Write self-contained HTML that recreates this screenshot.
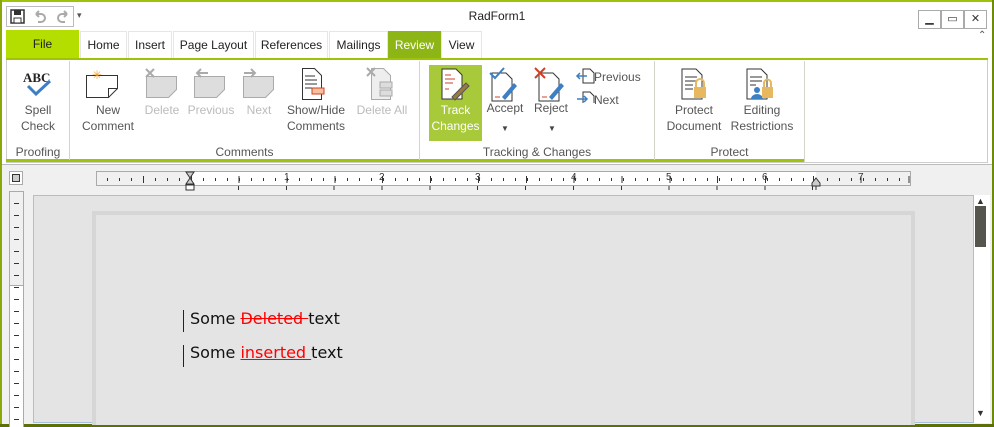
<!DOCTYPE html>
<html><head><meta charset="utf-8"><style>
*{margin:0;padding:0;box-sizing:border-box}
body{width:994px;height:427px;overflow:hidden;background:#fff;font-family:"Liberation Sans",sans-serif;font-size:12px;color:#333;position:relative}
.a{position:absolute}
.tab{position:absolute;top:31px;height:27px;line-height:27px;text-align:center;font-size:12px;color:#222;border:1px solid #e6e6e6;border-bottom:none;background:#fff}
.lbl{position:absolute;text-align:center;font-size:12px;line-height:16px;color:#555}
.dis{color:#bbb}
.gl{position:absolute;top:145px;font-size:12px;color:#555;text-align:center}
.sep{position:absolute;top:61px;width:1px;height:99px;background:#d4d4c8}
.wb{position:absolute;top:10px;width:23px;height:19px;border:1px solid #aaa;background:#fff;font-size:11px;text-align:center;line-height:17px;color:#333}
</style></head><body>
<div class="a" style="left:0;top:0;width:994px;height:2px;background:#9ec40a"></div>
<div class="a" style="left:0;top:0;width:2px;height:427px;background:#8aa80a"></div>
<div class="a" style="right:0;top:0;width:2px;height:427px;background:#6d8a08"></div>
<div class="a" style="left:0;bottom:0;width:994px;height:3px;background:#5d7008"></div>
<div class="a" style="left:6px;top:6px;width:68px;height:21px;border:1px solid #bbb"></div>
<svg class="a" style="left:10px;top:9px" width="62" height="16"><rect x="1" y="1" width="13" height="13" fill="none" stroke="#333" stroke-width="1.5"/><rect x="4" y="1" width="7" height="5" fill="#333"/><rect x="4" y="9" width="7" height="5" fill="#fff" stroke="#333"/><path d="M26 5 h5 a4 4 0 0 1 0 8 h-3 M26 5 l3 -3 M26 5 l3 3" stroke="#aaa" stroke-width="2" fill="none"/><path d="M57 5 h-5 a4 4 0 0 0 0 8 h3 M57 5 l-3 -3 M57 5 l-3 3" stroke="#aaa" stroke-width="2" fill="none"/></svg>
<div class="a" style="left:77px;top:10px;font-size:9px;color:#555">▾</div>
<div class="a" style="left:0;width:994px;top:9px;text-align:center;font-size:12px;color:#222">RadForm1</div>
<div class="wb" style="left:918px">▁</div><div class="wb" style="left:941px">▭</div><div class="wb" style="left:964px">✕</div>
<div class="a" style="left:978px;top:30px;font-size:10px;color:#555">⌃</div>
<div class="a" style="left:6px;top:30px;width:73px;height:28px;background:#b3de00;text-align:center;line-height:28px;color:#222">File</div>
<div class="tab" style="left:80px;width:47px">Home</div>
<div class="tab" style="left:128px;width:44px">Insert</div>
<div class="tab" style="left:173px;width:81px">Page Layout</div>
<div class="tab" style="left:255px;width:73px">References</div>
<div class="tab" style="left:329px;width:59px">Mailings</div>
<div class="tab" style="left:388px;width:53px;background:#8db516;color:#fff;border-color:#8db516">Review</div>
<div class="tab" style="left:441px;width:41px">View</div>
<div class="a" style="left:6px;top:58px;width:982px;height:2px;background:#9ec40a"></div>
<div class="a" style="left:6px;top:60px;width:982px;height:103px;border:1px solid #ccc;border-top:none"></div>
<div class="a" style="left:6px;top:159px;width:799px;height:3px;background:#9ec40a"></div>
<div class="sep" style="left:69px"></div><div class="sep" style="left:419px"></div><div class="sep" style="left:654px"></div><div class="sep" style="left:804px;height:102px"></div>
<div class="a" style="left:23px;top:70px;font-family:'Liberation Serif',serif;font-weight:bold;font-size:13px;color:#222">ABC</div>
<svg class="a" style="left:26px;top:80px" width="26" height="16"><path d="M2 6 L10 14 L24 1" stroke="#3d7fc4" stroke-width="3" fill="none"/></svg>
<div class="lbl" style="left:10px;top:102px;width:56px">Spell<br>Check</div>
<div class="gl" style="left:7px;width:62px">Proofing</div>
<svg class="a" style="left:80px;top:66px" width="340" height="36">
<path d="M6.5 9.5 h31 v13 l-9 9 h-22 z M28.5 31.5 v-9 h9" fill="#fff" stroke="#333"/>
<text x="12" y="13" font-size="12" fill="#f0a030">✳</text>
<g fill="#ddd" stroke="#aaa"><path d="M66.5 10.5 h30 v13 l-8 8 h-22 z"/><path d="M114.5 10.5 h30 v13 l-8 8 h-22 z"/><path d="M163.5 10.5 h30 v13 l-8 8 h-22 z"/></g>
<path d="M66 3 l8 8 M74 3 l-8 8" stroke="#aaa" stroke-width="2"/>
<path d="M128 7 h-11 M121 3 l-4 4 4 4" stroke="#aaa" stroke-width="2" fill="none"/>
<path d="M164 7 h11 M171 3 l4 4 -4 4" stroke="#aaa" stroke-width="2" fill="none"/>
<path d="M222.5 2.5 h12 l7 7 v24 h-19 z" fill="#fff" stroke="#333"/><path d="M225 10h10M225 14h12M225 18h12M225 22h12" stroke="#333"/><rect x="232" y="22" width="12" height="6" fill="#f5c0a0" stroke="#d04020"/>
<path d="M291.5 2.5 h12 l7 7 v24 h-19 z" fill="#eee" stroke="#aaa"/><rect x="300" y="16" width="12" height="6" fill="#ddd" stroke="#aaa"/><rect x="300" y="24" width="12" height="6" fill="#ddd" stroke="#aaa"/><path d="M287 2 l8 8 M295 2 l-8 8" stroke="#aaa" stroke-width="2"/>
</svg>
<div class="lbl" style="left:78px;top:102px;width:60px">New<br>Comment</div>
<div class="lbl dis" style="left:142px;top:102px;width:40px">Delete</div>
<div class="lbl dis" style="left:186px;top:102px;width:50px">Previous</div>
<div class="lbl dis" style="left:243px;top:102px;width:32px">Next</div>
<div class="lbl" style="left:284px;top:102px;width:64px">Show/Hide<br>Comments</div>
<div class="lbl dis" style="left:354px;top:102px;width:56px">Delete All</div>
<div class="gl" style="left:70px;width:349px">Comments</div>
<div class="a" style="left:429px;top:65px;width:53px;height:76px;background:#a8c93a"></div>
<svg class="a" style="left:440px;top:67px" width="220" height="36">
<path d="M2 2 h14 l6 6 v24 h-20 z" fill="#fff" stroke="#333"/><path d="M5 8h6M5 12h10M5 16h8M5 22h4" stroke="#d04020"/><path d="M12 30 l14 -14 3 3 -14 14 z" fill="#9a7a40" stroke="#555"/>
<path d="M52 6 h14 l6 6 v22 h-20 z" fill="#fff" stroke="#333"/><path d="M50 6 l5 5 9 -10" stroke="#3d7fc4" stroke-width="2" fill="none"/><path d="M62 30 l12 -14 3 3 -12 14 z" fill="#3d7fc4"/><path d="M55 30h5" stroke="#d04020"/>
<path d="M99 6 h14 l6 6 v22 h-20 z" fill="#fff" stroke="#333"/><path d="M95 1 l10 10 M105 1 l-10 10" stroke="#d04020" stroke-width="2"/><path d="M109 30 l12 -14 3 3 -12 14 z" fill="#3d7fc4"/><path d="M102 30h5" stroke="#d04020"/>
<path d="M143 2 h7 l4 4 v10 h-11 z" fill="#fff" stroke="#333"/><path d="M147 9 h-10 M140 6 l-3 3 3 3" stroke="#3d7fc4" stroke-width="1.5" fill="none"/>
<path d="M143 25 h7 l4 4 v10 h-11 z" fill="#fff" stroke="#333"/><path d="M137 32 h10 M144 29 l3 3 -3 3" stroke="#3d7fc4" stroke-width="1.5" fill="none"/>
</svg>
<div class="lbl" style="left:429px;top:102px;width:53px;color:#fff">Track<br>Changes</div>
<div class="lbl" style="left:484px;top:100px;width:42px">Accept</div>
<div class="lbl" style="left:531px;top:100px;width:40px">Reject</div>
<div class="a" style="left:501px;top:124px;font-size:8px;color:#444">▼</div>
<div class="a" style="left:548px;top:124px;font-size:8px;color:#444">▼</div>
<div class="lbl" style="left:594px;top:69px;text-align:left">Previous</div>
<div class="lbl" style="left:594px;top:92px;text-align:left">Next</div>
<div class="gl" style="left:420px;width:234px">Tracking &amp; Changes</div>
<svg class="a" style="left:680px;top:67px" width="100" height="36">
<path d="M2 2 h14 l6 6 v24 h-20 z" fill="#fff" stroke="#333"/><path d="M5 10h12M5 14h12M5 18h8M5 22h8" stroke="#333"/><rect x="14" y="20" width="12" height="11" fill="#e8b860"/><path d="M16 20 v-4 a4 4 0 0 1 8 0 v4" stroke="#e8b860" stroke-width="2" fill="none"/>
<path d="M67 2 h14 l6 6 v24 h-20 z" fill="#fff" stroke="#333"/><path d="M70 10h12M70 14h12M70 18h6" stroke="#333"/><circle cx="77" cy="23" r="3" fill="#3d7fc4"/><path d="M71 32 a6 5 0 0 1 12 0z" fill="#3d7fc4"/><rect x="82" y="20" width="11" height="11" fill="#e8b860"/><path d="M84 20 v-4 a3.5 3.5 0 0 1 7 0 v4" stroke="#e8b860" stroke-width="2" fill="none"/>
</svg>
<div class="lbl" style="left:664px;top:102px;width:60px">Protect<br>Document</div>
<div class="lbl" style="left:728px;top:102px;width:68px">Editing<br>Restrictions</div>
<div class="gl" style="left:655px;width:149px">Protect</div>
<div class="a" style="left:2px;top:164px;width:990px;height:260px;background:#f0f0f0;border-top:1px solid #bbb"></div>
<div class="a" style="left:9px;top:171px;width:14px;height:14px;border:1px solid #aaa;background:#fff"><div style="margin:2px;width:8px;height:8px;border:1px solid #333;background:#ccc"></div></div>
<div class="a" style="left:96px;top:171px;width:815px;height:15px;border:1px solid #aaa;background:#f0f0f0"></div>
<div class="a" style="left:190px;top:172px;width:626px;height:13px;background:#fff"></div>
<div class="a" style="left:107px;top:178px;width:800px;height:3px;background:repeating-linear-gradient(90deg,#333 0 1px,transparent 1px 12px)"></div>
<div class="a" style="left:143px;top:176px;width:770px;height:7px;background:repeating-linear-gradient(90deg,#333 0 1px,transparent 1px 47.85px)"></div>
<div class="a" style="left:238px;top:186px;width:600px;height:4px;background:repeating-linear-gradient(90deg,#333 0 1px,transparent 1px 47.85px)"></div>
<div class="a" style="left:284px;top:172px;font-size:10px;color:#333">1</div><div class="a" style="left:379px;top:172px;font-size:10px">2</div><div class="a" style="left:475px;top:172px;font-size:10px">3</div><div class="a" style="left:571px;top:172px;font-size:10px">4</div><div class="a" style="left:666px;top:172px;font-size:10px">5</div><div class="a" style="left:762px;top:172px;font-size:10px">6</div><div class="a" style="left:858px;top:172px;font-size:10px">7</div>
<svg class="a" style="left:185px;top:171px" width="10" height="20"><path d="M1 1h8l-4 6z M1 13h8l-4-6z" fill="#ccc" stroke="#333"/><rect x="1" y="14" width="8" height="5" fill="#fff" stroke="#333"/></svg>
<svg class="a" style="left:811px;top:176px" width="10" height="15"><path d="M1 10h8v-3l-4-5-4 5z" fill="#ccc" stroke="#333"/><path d="M5 10v4" stroke="#333"/></svg>
<div class="a" style="left:9px;top:191px;width:15px;height:236px;background:#fff;border:1px solid #aaa;border-bottom:none"></div>
<div class="a" style="left:10px;top:192px;width:13px;height:94px;background:#f0f0f0;border-bottom:1px solid #aaa"></div>
<div class="a" style="left:14px;top:203px;width:5px;height:224px;background:repeating-linear-gradient(180deg,#333 0 1px,transparent 1px 12px)"></div>
<div class="a" style="left:33px;top:195px;width:941px;height:228px;background:#e4e4e4;border-top:1px solid #a8c0e0;border-left:1px solid #a8c0e0;border-bottom:1px solid #a8c0e0"></div>
<div class="a" style="left:92px;top:211px;width:823px;height:214px;background:#d6d6d6"></div>
<div class="a" style="left:96px;top:215px;width:815px;height:210px;background:#e4e4e4"></div>
<div class="a" style="left:183px;top:310px;width:1px;height:22px;background:#222"></div>
<div class="a" style="left:183px;top:345px;width:1px;height:22px;background:#222"></div>
<div class="a" style="left:190px;top:309px;font-family:'DejaVu Sans',sans-serif;font-size:16px;color:#111;white-space:pre">Some <span style="color:#f00;text-decoration:line-through">Deleted </span>text</div>
<div class="a" style="left:190px;top:343px;font-family:'DejaVu Sans',sans-serif;font-size:16px;color:#111;white-space:pre">Some <span style="color:#f00;text-decoration:underline">inserted </span>text</div>
<div class="a" style="left:973px;top:195px;width:17px;height:228px;background:#fff;border-left:1px solid #a8c0e0"></div>
<div class="a" style="left:976px;top:196px;font-size:9px;color:#333">▲</div>
<div class="a" style="left:976px;top:408px;font-size:9px;color:#333">▼</div>
<div class="a" style="left:975px;top:206px;width:11px;height:41px;background:#55554d"></div>
</body></html>
